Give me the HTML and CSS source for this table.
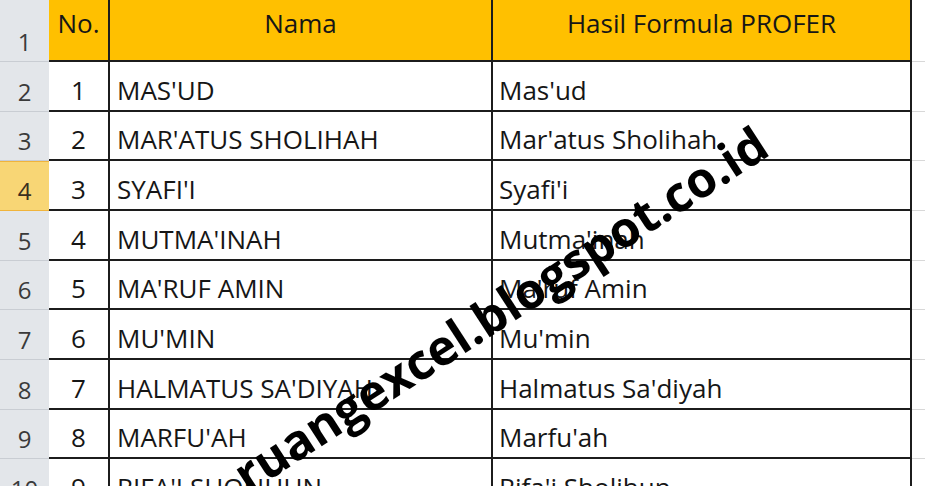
FILE: index.html
```html
<!DOCTYPE html>
<html>
<head>
<meta charset="utf-8">
<link rel="stylesheet" href="styles.css">
</head>
<body>
<div class="sheet">
  <div class="row hdr">
    <div class="rh">1</div>
    <div class="c no">No.</div>
    <div class="c nama">Nama</div>
    <div class="c hasil">Hasil Formula PROFER</div>
    <div class="rest"></div>
  </div>
  <div class="row r50">
    <div class="rh">2</div>
    <div class="c no">1</div>
    <div class="c nama">MAS'UD</div>
    <div class="c hasil">Mas'ud</div>
    <div class="rest"></div>
  </div>
  <div class="row r49">
    <div class="rh">3</div>
    <div class="c no">2</div>
    <div class="c nama">MAR'ATUS SHOLIHAH</div>
    <div class="c hasil">Mar'atus Sholihah</div>
    <div class="rest"></div>
  </div>
  <div class="row r50">
    <div class="rh sel">4</div>
    <div class="c no">3</div>
    <div class="c nama">SYAFI'I</div>
    <div class="c hasil">Syafi'i</div>
    <div class="rest"></div>
  </div>
  <div class="row r50">
    <div class="rh">5</div>
    <div class="c no">4</div>
    <div class="c nama">MUTMA'INAH</div>
    <div class="c hasil">Mutma'inah</div>
    <div class="rest"></div>
  </div>
  <div class="row r49">
    <div class="rh">6</div>
    <div class="c no">5</div>
    <div class="c nama">MA'RUF AMIN</div>
    <div class="c hasil">Ma'ruf Amin</div>
    <div class="rest"></div>
  </div>
  <div class="row r50">
    <div class="rh">7</div>
    <div class="c no">6</div>
    <div class="c nama">MU'MIN</div>
    <div class="c hasil">Mu'min</div>
    <div class="rest"></div>
  </div>
  <div class="row r50">
    <div class="rh">8</div>
    <div class="c no">7</div>
    <div class="c nama">HALMATUS SA'DIYAH</div>
    <div class="c hasil">Halmatus Sa'diyah</div>
    <div class="rest"></div>
  </div>
  <div class="row r49">
    <div class="rh">9</div>
    <div class="c no">8</div>
    <div class="c nama">MARFU'AH</div>
    <div class="c hasil">Marfu'ah</div>
    <div class="rest"></div>
  </div>
  <div class="row r50">
    <div class="rh">10</div>
    <div class="c no">9</div>
    <div class="c nama">RIFA'I SHOLIHUN</div>
    <div class="c hasil">Rifa'i Sholihun</div>
    <div class="rest"></div>
  </div>
  <div class="wm">ruangexcel.blogspot.co.id</div>
</div>
</body>
</html>
```
FILE: styles.css
```css
html, body {
  margin: 0;
  padding: 0;
  background: #ffffff;
}
body {
  width: 925px;
  height: 486px;
  overflow: hidden;
  font-family: "Open Sans", Lato, sans-serif;
  color: #161616;
}
.sheet {
  position: relative;
  width: 925px;
  height: 486px;
  overflow: hidden;
}
.row {
  display: grid;
  grid-template-columns: 49px 61px 383px 419px 13px;
  height: 50px;
}
.row.r49 { height: 49px; }
.row.hdr { height: 62px; }

.rh {
  box-sizing: border-box;
  background: #e3e6ea;
  border-bottom: 1px solid #c9cdd3;
  color: #3a3a3a;
  font-size: 24px;
  line-height: 1;
  display: flex;
  align-items: flex-end;
  justify-content: center;
  padding-bottom: 7px;
}
.rh.sel {
  background: #f8d675;
  border-top: 1px solid #f0b43c;
  border-bottom: 1px solid #f0b43c;
  color: #3a3020;
}
.c {
  box-sizing: border-box;
  border-right: 2px solid #1c1c1c;
  border-bottom: 2px solid #1c1c1c;
  font-size: 26px;
  line-height: 1;
  display: flex;
  align-items: flex-end;
  padding-bottom: 7px;
  white-space: nowrap;
  overflow: hidden;
}
.c.no { justify-content: center; }
.c.nama { padding-left: 7px; }
.c.hasil { padding-left: 6px; }
.hdr .c {
  background: #ffc000;
  align-items: flex-start;
  justify-content: center;
  padding: 10px 0 0 0;
}
.rest {
  box-sizing: border-box;
  border-bottom: 1px solid #d8d8d8;
}
.wm {
  position: absolute;
  left: 248px;
  top: 494px;
  transform-origin: 0 0;
  transform: rotate(-33deg) translate(0, -43px);
  font-size: 49px;
  line-height: 1;
  font-weight: 700;
  color: #000;
  white-space: nowrap;
}
```
